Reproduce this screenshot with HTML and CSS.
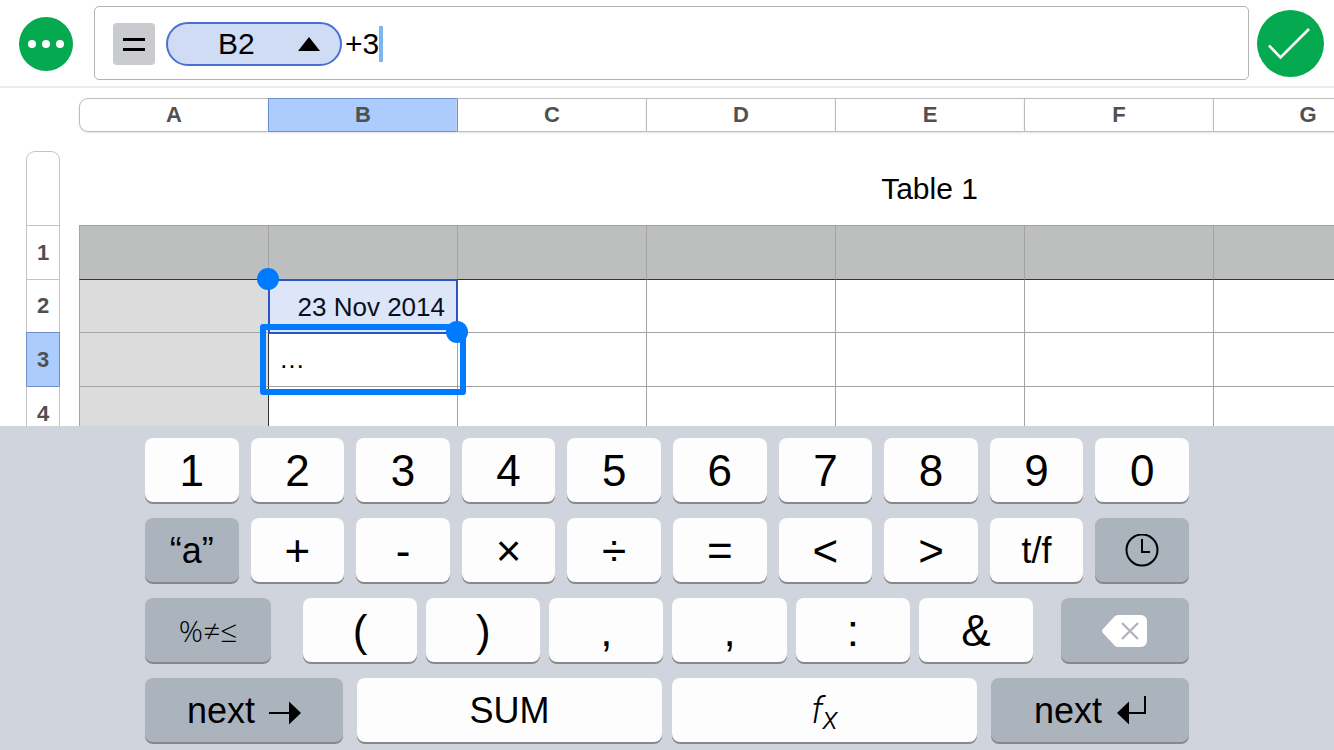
FILE: index.html
```html
<!DOCTYPE html>
<html lang="en">
<head>
<meta charset="utf-8">
<meta name="viewport" content="width=device-width, initial-scale=1">
<title>Table 1</title>
<link rel="stylesheet" href="styles.css">
</head>
<body>
<header class="bar">
  <button class="round menu" type="button" aria-label="More">
    <svg width="54" height="54" viewBox="0 0 54 54" fill="#fff"><circle cx="13" cy="27" r="4"/><circle cx="27" cy="27" r="4"/><circle cx="41" cy="27" r="4"/></svg>
  </button>
  <div class="formula">
    <span class="equals" aria-hidden="true">
      <svg width="42" height="42" viewBox="0 0 42 42" fill="#000"><path d="M10 15h22v3H10zM10 25h22v3H10z"/></svg>
    </span>
    <button class="token" type="button">B2
      <svg width="22" height="14" viewBox="0 0 22 14"><path d="M11 0l11 14H0z"/></svg>
    </button>
    <input class="expression" type="text" value="+3" aria-label="Formula">
    <span class="caret"></span>
  </div>
  <button class="round done" type="button" aria-label="Done">
    <svg width="67" height="67" viewBox="0 0 67 67" fill="none" stroke="#fff" stroke-width="2.6"><path d="M12 35.500l11.500 12L52 19"/></svg>
  </button>
</header>

<main class="sheet">
  <ul class="columns">
    <li>A</li><li class="active">B</li><li>C</li><li>D</li><li>E</li><li>F</li><li>G</li>
  </ul>
  <ul class="rows">
    <li class="corner"></li><li>1</li><li>2</li><li class="active">3</li><li>4</li>
  </ul>
  <table class="grid">
    <caption>Table 1</caption>
    <thead>
      <tr><th></th><th></th><th></th><th></th><th></th><th></th><th></th><th></th><th></th></tr>
    </thead>
    <tbody>
      <tr><th></th><td class="referenced">23 Nov 2014<span class="reference"></span><span class="handle start"></span><span class="handle end"></span></td><td></td><td></td><td></td><td></td><td></td><td></td><td></td></tr>
      <tr><th></th><td class="editing">…<span class="selection"></span></td><td></td><td></td><td></td><td></td><td></td><td></td><td></td></tr>
      <tr><th></th><td></td><td></td><td></td><td></td><td></td><td></td><td></td><td></td></tr>
    </tbody>
  </table>
</main>

<section class="keyboard" aria-label="Formula keyboard">
  <div class="keys tens">
    <button class="key">1</button><button class="key">2</button><button class="key">3</button><button class="key">4</button><button class="key">5</button><button class="key">6</button><button class="key">7</button><button class="key">8</button><button class="key">9</button><button class="key">0</button>
  </div>
  <div class="keys tens">
    <button class="key dark word">“a”</button><button class="key">+</button><button class="key">-</button><button class="key">×</button><button class="key">÷</button><button class="key">=</button><button class="key">&lt;</button><button class="key">&gt;</button><button class="key word">t/f</button>
    <button class="key dark" aria-label="Date and time">
      <svg width="34" height="34" viewBox="0 0 34 34" fill="none" stroke="#000" stroke-width="2"><circle cx="17" cy="16" r="15.500"/><path d="M17 5v13h8"/></svg>
    </button>
  </div>
  <div class="keys symbols">
    <button class="key dark operators">%≠≤</button>
    <div class="marks">
      <button class="key">(</button><button class="key">)</button><button class="key">,</button><button class="key">,</button><button class="key">:</button><button class="key">&amp;</button>
    </div>
    <button class="key dark" aria-label="Delete">
      <svg width="46" height="32" viewBox="0 0 46 32"><path d="M16 0H39a6 6 0 0 1 6 6v20a6 6 0 0 1-6 6H16q-2 0-3.500-1.500L1 18q-2-2 0-4L12.500 1.500Q14 0 16 0z" fill="#fff"/><path d="M20 8l16 16M36 8L20 24" stroke="#b1b5ba" stroke-width="2.400"/></svg>
    </button>
  </div>
  <div class="keys actions">
    <button class="key dark word">next
      <svg width="32" height="30" viewBox="0 0 32 30"><path d="M0 17h21" stroke="#000" stroke-width="2"/><path d="M20 5.500L32 17 20 28.500z"/></svg>
    </button>
    <div class="functions">
      <button class="key word">SUM</button>
      <button class="key fx" aria-label="Functions"><span>f<sub>x</sub></span></button>
    </div>
    <button class="key dark word">next
      <svg width="30" height="30" viewBox="0 0 30 30"><path d="M11 17h18V0" fill="none" stroke="#000" stroke-width="2"/><path d="M13 5.500v23L1 17z"/></svg>
    </button>
  </div>
</section>
</body>
</html>
```
FILE: styles.css
```css
* {
  box-sizing: border-box;
}

body {
  margin: 0;
  height: 100vh;
  display: flex;
  flex-direction: column;
  overflow: hidden;
  background: #fff;
  color: #000;
  font-family: "Liberation Sans", Arial, sans-serif;
}

button,
input {
  font: inherit;
  color: inherit;
  border: 0;
  padding: 0;
  margin: 0;
}

svg {
  display: block;
  flex: none;
}

ul {
  list-style: none;
  margin: 0;
  padding: 0;
}

/* Formula bar */
.bar {
  display: flex;
  align-items: center;
  padding: 6px 10px 6px 19px;
  border-bottom: 2px solid #ececec;
}

.round {
  flex: none;
  border-radius: 50%;
  background: #05a94f;
}

.menu {
  margin: 2px 21px 0 0;
}

.done {
  margin-left: 8px;
}

.formula {
  flex: 1;
  min-width: 0;
  height: 74px;
  display: flex;
  align-items: center;
  padding: 2px 18px 0;
  border: 1px solid #b4b4b4;
  border-radius: 5px;
  font-size: 30px;
}

.equals {
  margin-right: 11px;
  border-radius: 4px;
  background: #c9cbcf;
}

.token {
  width: 176px;
  height: 44px;
  display: flex;
  align-items: center;
  justify-content: space-between;
  padding: 0 20px 0 50px;
  border: 2px solid #4870d3;
  border-radius: 22px;
  background: #cfdcf4;
}

.expression {
  width: 34px;
  margin-left: 3px;
  background: none;
  outline: 0;
}

.caret {
  width: 4px;
  height: 36px;
  background: #80b6ee;
}

/* Sheet */
.sheet {
  flex: 1;
  min-height: 0;
  overflow: hidden;
  display: grid;
  grid-template-columns: 34px max-content;
  grid-template-rows: 34px max-content;
  gap: 19px;
  padding: 10px 0 0 26px;
}

.columns,
.rows {
  color: #505050;
  font-size: 22px;
  font-weight: bold;
}

.columns {
  grid-column: 2;
  display: flex;
}

.columns li {
  width: 189px;
  display: flex;
  align-items: center;
  justify-content: center;
  border: solid #bcbcbc;
  border-width: 1px 0 1px 1px;
  box-shadow: 0 1px 2px #e4e4e4;
}

.columns li:first-child {
  border-radius: 9px 0 0 9px;
}

.rows li {
  height: 54px;
  display: flex;
  align-items: center;
  justify-content: center;
  border: solid #c4c4c4;
  border-width: 1px 1px 0;
}

.rows li:nth-child(3) {
  height: 53px;
}

.rows .corner {
  height: 74px;
  border-radius: 9px 9px 0 0;
}

.columns .active,
.rows .active {
  background: #adccfe;
  border-color: #6d8fcb;
}

.columns .active + li {
  border-left-color: #6d8fcb;
}

.rows .active + li {
  border-top-color: #6d8fcb;
}

.grid {
  width: 1701px;
  table-layout: fixed;
  border-collapse: separate;
  border-spacing: 0;
  font-size: 26px;
}

.grid caption {
  height: 74px;
  line-height: 76px;
  font-size: 30px;
}

.grid th,
.grid td {
  height: 54px;
  padding: 0 12px;
  border: solid #a3a3a3;
  border-width: 1px 0 0 1px;
  text-align: left;
}

.grid tbody tr:first-child > * {
  height: 53px;
  border-top-color: #333;
}

.grid thead th {
  background: #bdbfbe;
}

.grid tbody th {
  background: #dcdcdc;
}

.grid tbody th + td {
  border-left-color: #333;
}

.grid .referenced {
  position: relative;
  padding-top: 2px;
  background: #dde6f9;
  color: #0a0f1c;
  text-align: right;
}

.grid .editing {
  position: relative;
  padding-left: 10px;
}

.reference {
  position: absolute;
  z-index: 1;
  inset: -1px -1px -2px -1px;
  border: 2px solid #2b55c4;
}

.selection {
  position: absolute;
  z-index: 2;
  inset: -9px -9px -9px -9px;
  border: 6px solid #007aff;
  border-radius: 3px;
}

.handle {
  position: absolute;
  z-index: 3;
  width: 22px;
  height: 22px;
  border-radius: 50%;
  background: #007aff;
}

.handle.start {
  left: -12px;
  top: -12px;
}

.handle.end {
  right: -11px;
  bottom: -11px;
}

/* Keyboard */
.keyboard {
  position: relative;
  z-index: 4;
  display: flex;
  flex-direction: column;
  align-items: center;
  gap: 16px;
  padding: 12px 8px 8px;
  background: #d0d4dc;
}

.keys {
  width: 100%;
  max-width: 1044px;
  display: grid;
}

.tens {
  grid-template-columns: repeat(10, 1fr);
  gap: 12px;
}

.symbols {
  grid-template-columns: 126px 1fr 128px;
}

.marks {
  display: grid;
  grid-template-columns: repeat(6, 1fr);
  gap: 9px;
  padding: 0 28px 0 32px;
}

.actions {
  grid-template-columns: 198px 1fr 198px;
  gap: 14px;
}

.functions {
  display: grid;
  grid-template-columns: 1fr 1fr;
  gap: 10px;
}

.key {
  min-width: 0;
  height: 64px;
  display: flex;
  align-items: center;
  justify-content: center;
  gap: 14px;
  padding-top: 2px;
  border-radius: 8px;
  background: #fdfdfd;
  box-shadow: 0 2px 0 #85888d;
  font-size: 44px;
  line-height: 1;
}

.key.dark {
  background: #abb3bd;
}

.key.word {
  font-size: 36px;
}

.key.operators {
  font-family: "Open Sans", "Noto Sans", sans-serif;
  font-size: 30px;
  font-weight: 300;
}

.key.fx {
  font-family: Roboto, "Noto Sans", sans-serif;
  font-size: 36px;
  font-style: italic;
  font-weight: 300;
}

.fx sub {
  font-size: 32px;
  line-height: 0;
  vertical-align: -6px;
}
```
